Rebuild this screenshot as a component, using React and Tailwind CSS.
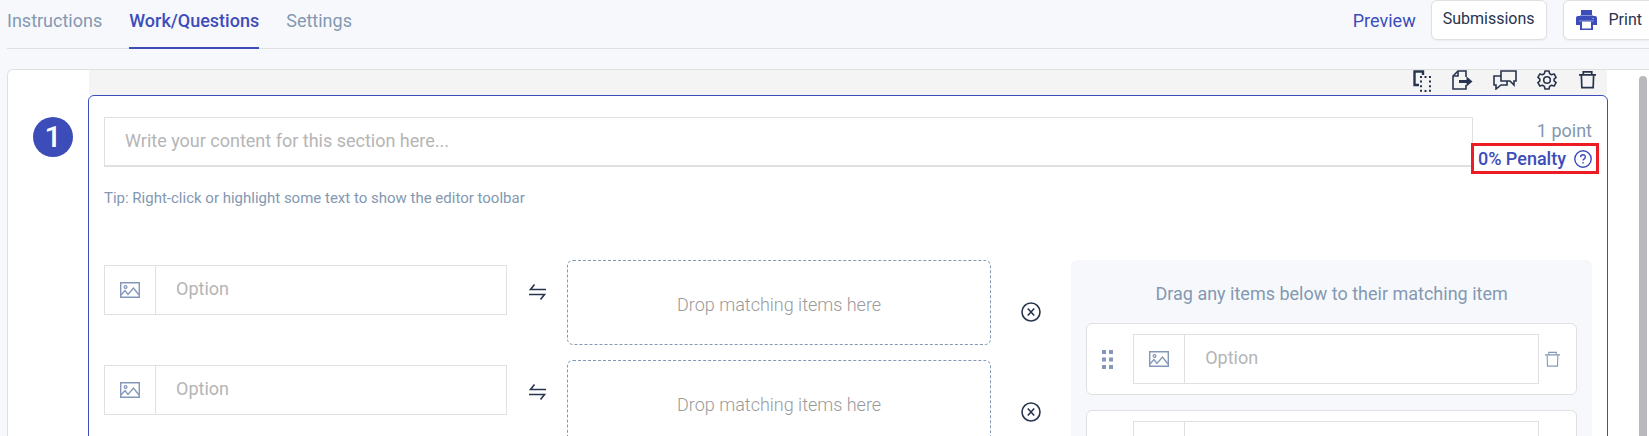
import clsx from "clsx";

const tabs = ["Instructions", "Work/Questions", "Settings"];

function CopyIcon() {
    return (
        <svg width="18" height="22" viewBox="0 0 18 22" fill="none" stroke="currentColor">
            <path d="M6 15H1.500V1.500H10V5" strokeWidth="2.400" />
            <path d="M8 6v16M17 6v16" strokeWidth="2" strokeDasharray="2 2.600" />
            <path d="M11.500 7h2M11.500 21h2" strokeWidth="2" />
        </svg>
    );
}

function ExportIcon() {
    return (
        <svg width="21" height="20" viewBox="0 0 21 20" fill="none" stroke="currentColor" strokeWidth="1.6">
            <path d="M14 7V1H6L1 6v13h13v-4" />
            <path d="M6 1v5H1" />
            <path d="M7 11.500h9" strokeWidth="3" />
            <path d="M14.500 6.500l6 5-6 5z" fill="currentColor" stroke="none" />
        </svg>
    );
}

function CommentsIcon() {
    return (
        <svg width="24" height="20" viewBox="0 0 24 20" fill="none" stroke="currentColor" strokeWidth="1.6">
            <path d="M8 1h15v10h-2v4l-4-4H8z" />
            <path d="M8 6H1v9h2v4l5-4h6v-4" />
        </svg>
    );
}

function GearIcon() {
    return (
        <svg width="20" height="20" viewBox="0 0 20 20" fill="none" stroke="currentColor" strokeWidth="1.6" strokeLinejoin="round">
            <path d="M8 1h4l.6 2.6 1.9 1.1 2.6-.8 2 3.4-2 1.8v1.8l2 1.8-2 3.4-2.6-.8-1.9 1.1L12 19H8l-.6-2.6-1.9-1.1-2.6.8-2-3.4 2-1.8V9.100l-2-1.800 2-3.400 2.600.8 1.900-1.100z" />
            <circle cx="10" cy="10" r="3.300" />
        </svg>
    );
}

function TrashIcon({ small }) {
    return (
        <svg
            width={small ? 15 : 17}
            height={small ? 16 : 19}
            viewBox="0 0 18 19"
            fill="none"
            stroke="currentColor"
            strokeWidth={small ? 1.3 : 1.8}
        >
            <path d="M0 4.500h18M4.500 4V1.500h9V4M2.500 4.500l.5 13.500h12l.5-13.500" />
        </svg>
    );
}

function PrinterIcon() {
    return (
        <svg width="21" height="20" viewBox="0 0 21 20" className="text-[#3c4db9]">
            <path d="M5 0h11v5H5z" fill="currentColor" />
            <path d="M2 6h17a2 2 0 0 1 2 2v7h-4v5H4v-5H0V8a2 2 0 0 1 2-2z" fill="currentColor" />
            <path d="M6 11.500h9v7H6z" fill="white" />
            <path d="M16 8.500h2M3 11h15" stroke="#8b97da" />
            <path d="M4 5.500h13" stroke="#8b97da" />
        </svg>
    );
}

function PictureIcon() {
    return (
        <svg width="20" height="16" viewBox="0 0 20 16" fill="none" stroke="currentColor" strokeWidth="1.4">
            <path d="M.7.7h18.600v14.600H.7z" />
            <circle cx="5.500" cy="5" r="1.400" strokeWidth="1.200" />
            <path d="M1 13l4-4.500 3 4 5.500-6.500 5.500 7" />
        </svg>
    );
}

function SwapIcon() {
    return (
        <svg width="17" height="16" viewBox="0 0 17 16" fill="none" stroke="currentColor" strokeWidth="1.6">
            <path d="M17 5.500H1.500L5.500.5M0 10.500h15.500l-4 5" />
        </svg>
    );
}

function RemoveIcon() {
    return (
        <svg width="20" height="20" viewBox="0 0 20 20" fill="none" stroke="currentColor" strokeWidth="1.6">
            <circle cx="10" cy="10" r="9" />
            <path d="M6.800 6.500l6.400 7M13.200 6.500l-6.400 7" />
        </svg>
    );
}

function HelpIcon() {
    return (
        <svg width="18" height="18" viewBox="0 0 18 18" fill="none" stroke="currentColor" strokeWidth="1.4">
            <circle cx="9" cy="9" r="8.200" />
            <path d="M6.600 7.200C6.600 4 11.400 4 11.400 7c0 1.800-2.400 1.900-2.400 3.600M9 12v1.500" />
        </svg>
    );
}

function GripIcon() {
    return (
        <svg width="11" height="19" viewBox="0 0 11 19" fill="currentColor">
            <path d="M0 0h4v4H0zM7 0h4v4H7zM0 7.500h4v4H0zM7 7.500h4v4H7zM0 15h4v4H0zM7 15h4v4H7z" />
        </svg>
    );
}

const tools = [
    { label: "Duplicate", Icon: CopyIcon },
    { label: "Export", Icon: ExportIcon },
    { label: "Comments", Icon: CommentsIcon },
    { label: "Question settings", Icon: GearIcon },
    { label: "Delete question", Icon: TrashIcon },
];

function OptionField({ label, className }) {
    return (
        <div className={clsx("flex h-[50px] border border-[#e0e0e0] bg-white", className)}>
            <button type="button" aria-label="Add image" className="flex w-[51px] shrink-0 items-center justify-center border-r border-[#e0e0e0] text-[#8398b8]">
                <PictureIcon />
            </button>
            <input
                type="text"
                aria-label={label}
                placeholder="Option"
                className="w-full min-w-0 px-5 pb-0.5 text-lg outline-none placeholder:text-[#b5b5b5]"
            />
        </div>
    );
}

function MatchRow({ index }) {
    return (
        <div className="flex">
            <OptionField label={`Option ${index}`} className="mt-[5px] w-5/12" />
            <div className="flex w-[60px] shrink-0 items-start justify-center pt-6 text-[#28344e]">
                <SwapIcon />
            </div>
            <div className="flex h-[85px] flex-1 items-center justify-center rounded-md border border-dashed border-[#8398b1] pt-1 text-lg font-light text-[#999]">
                Drop matching items here
            </div>
            <div className="flex w-20 shrink-0 items-start pt-[42px] pl-[30px] text-[#28344e]">
                <button type="button" aria-label="Remove match">
                    <RemoveIcon />
                </button>
            </div>
        </div>
    );
}

function DragItem({ index }) {
    return (
        <li className="flex items-center rounded-md border border-[#e0e0e0] bg-white py-2.5 pr-4 pl-[15px] text-[#8398b8]">
            <GripIcon />
            <OptionField label={`Matching item ${index}`} className="ml-5 flex-1" />
            <button type="button" aria-label="Delete item" className="ml-1.5">
                <TrashIcon small />
            </button>
        </li>
    );
}

export default function App() {
    return (
        <div className="flex h-screen flex-col overflow-hidden bg-[#f7f8fc] pl-[7px] font-[Roboto,sans-serif] text-lg text-[#8398b1]">
            <header className="flex h-[49px] shrink-0 justify-between border-b border-[#dfe1e1]">
                <nav className="flex gap-[27px]">
                    {tabs.map((tab) => (
                        <a
                            key={tab}
                            href="#"
                            className={clsx(
                                "-mb-px h-[49px] pt-[7px]",
                                tab === "Work/Questions" && "border-b-2 border-[#3c4db9] font-medium text-[#3c4db9]"
                            )}
                        >
                            {tab}
                        </a>
                    ))}
                </nav>
                <div className="flex items-start">
                    <a href="#" className="mr-[15px] pt-[7px] text-[#3c4db9]">Preview</a>
                    <button type="button" className="mr-4 h-10 rounded-md border border-[#e0e0e0] bg-white px-[11px] pb-0.5 text-base text-[#28344e] shadow-xs">
                        Submissions
                    </button>
                    <button type="button" className="flex h-10 items-center gap-3 rounded-l-md border border-r-0 border-[#e0e0e0] bg-white pr-[7px] pl-3 text-base text-[#28344e] shadow-xs">
                        <PrinterIcon />
                        Print
                    </button>
                </div>
            </header>

            <main className="mt-5 flex min-h-0 flex-1 overflow-hidden rounded-tl-md border-t border-l border-[#e0e0e0] bg-white">
                <div className="w-20 shrink-0 pt-[47px] pl-[25px]">
                    <div className="flex size-10 items-center justify-center rounded-full bg-[#3c4db9] text-[30px] font-medium text-white">
                        1
                    </div>
                </div>

                <div className="min-w-0 flex-1">
                    <div className="mx-px flex h-[25px] items-start justify-end gap-5 bg-[#f4f4f4] pr-2.5 text-[#28344e]">
                        {tools.map(({ label, Icon }) => (
                            <button key={label} type="button" aria-label={label} className="flex min-w-5 justify-center">
                                <Icon />
                            </button>
                        ))}
                    </div>

                    <section className="h-[700px] rounded-t-md border border-[#3c4db9] bg-white px-[15px] pt-[21px]">
                        <div className="flex">
                            <input
                                type="text"
                                aria-label="Section content"
                                placeholder="Write your content for this section here..."
                                className="h-[50px] min-w-0 flex-1 border border-b-2 border-[#e0e0e0] px-5 pb-0.5 text-lg outline-none placeholder:text-[#b5b5b5]"
                            />
                            <div className="relative w-[119px] shrink-0 text-right">
                                <div>1 point</div>
                                {/* penalty callout sits over the edge of the editor */}
                                <div className="absolute top-[26px] -right-[7px] flex h-[31px] items-center gap-2 border-3 border-[#ed1c24] bg-white px-1 font-medium whitespace-nowrap text-[#3c4db9]">
                                    0% Penalty
                                    <button type="button" aria-label="About penalties">
                                        <HelpIcon />
                                    </button>
                                </div>
                            </div>
                        </div>
                        <p className="mt-[19px] text-[15px] leading-6">
                            Tip: Right-click or highlight some text to show the editor toolbar
                        </p>

                        <div className="mt-[50px] flex">
                            <div className="flex min-w-0 flex-1 flex-col gap-[15px]">
                                <MatchRow index={1} />
                                <MatchRow index={2} />
                            </div>
                            <aside className="w-[35%] shrink-0 rounded-md bg-[#f7f8fc] px-[15px] pt-5">
                                <h2 className="text-center">Drag any items below to their matching item</h2>
                                <ul className="mt-[15px] flex flex-col gap-[15px]">
                                    <DragItem index={1} />
                                    <DragItem index={2} />
                                </ul>
                            </aside>
                        </div>
                    </section>
                </div>

                <div className="flex w-[41px] shrink-0 justify-end pt-1.5 pr-0.5">
                    <div className="w-2 rounded-t-full bg-[#b9b8bd]" />
                </div>
            </main>
        </div>
    );
}
